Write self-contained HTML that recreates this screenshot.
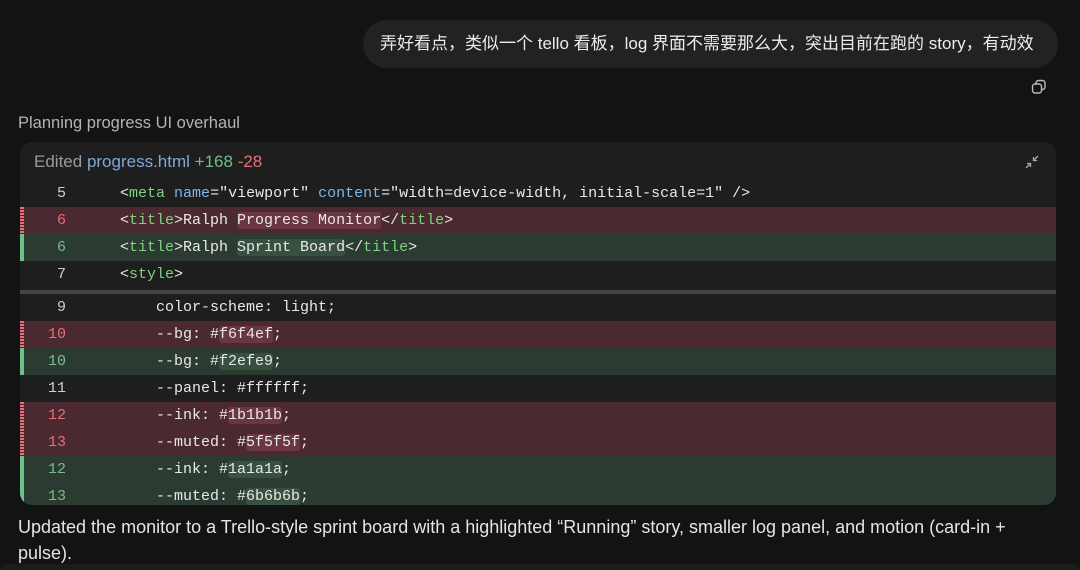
<!DOCTYPE html>
<html><head><meta charset="utf-8"><style>
body{margin:0;width:1080px;height:570px;background:#131313;overflow:hidden;font-family:"Liberation Sans","Noto Sans CJK SC",sans-serif;color:#e6e6e6;position:relative}
.bubble{position:absolute;left:363px;top:20px;width:695px;height:48px;background:#222;border-radius:24px;font-size:17px;line-height:48px;color:#ececec;box-sizing:border-box;padding-left:17px;white-space:nowrap}
.plan{position:absolute;left:18px;top:114px;font-size:16.5px;color:#b4b4b4}
.card{position:absolute;left:20px;top:142px;width:1036px;height:363px;background:#1e1e1e;border-radius:12px;overflow:hidden}
.hdr{position:absolute;left:14px;top:10px;font-size:17px;color:#9a9a9a}
.row{position:absolute;left:0;width:1036px;height:27px;font-family:"Liberation Mono",monospace;font-size:15px;line-height:27px;white-space:pre;color:#e8e8e8}
.n{position:absolute;left:0;width:46px;text-align:right;color:#cfcfcf}
.c{position:absolute;left:64px}
.del{background:#4a2a30}.del .n{color:#e96d7a}
.add{background:#2b3b31}.add .n{color:#76bf8c}
.del::before{content:"";position:absolute;left:0;top:0;width:4px;height:27px;background:repeating-linear-gradient(#e96d7a 0 2px,transparent 2px 3px)}
.add::before{content:"";position:absolute;left:0;top:0;width:4px;height:27px;background:#6fbf8a}
.dn{background:#6a363f;border-radius:3px}.an{background:#38503f;border-radius:3px}
.t{color:#7fd17f}.a{color:#7fb6e8}
.sep{position:absolute;left:0;top:148px;width:1036px;height:4px;background:#444}
.bottom{position:absolute;left:18px;top:514px;width:1030px;font-size:18px;line-height:26px;color:#e4e4e4}
</style></head><body>
<div class="bubble">弄好看点，类似一个 tello 看板，log 界面不需要那么大，突出目前在跑的 story，有动效</div>
<svg style="position:absolute;left:1031px;top:79px" width="16" height="16" viewBox="0 0 16 16" fill="none" stroke="#bbb" stroke-width="1.4"><rect x="1.5" y="5" width="9" height="9" rx="2.5"/><path d="M5 5V4a2.5 2.5 0 0 1 2.5-2.5h4A2.5 2.5 0 0 1 14 4v4a2.5 2.5 0 0 1-2.5 2.5h-1"/></svg>
<div class="plan">Planning progress UI overhaul</div>
<div class="card">
<div class="hdr">Edited <span style="color:#7fa8d8">progress.html</span> <span style="color:#6fbf8a">+168</span> <span style="color:#e96d7a">-28</span></div>
<svg style="position:absolute;left:1004px;top:12px" width="16" height="16" viewBox="0 0 16 16" fill="none" stroke="#aaa" stroke-width="1.3"><path d="M14 2 9.5 6.5M9.5 3v3.5H13M2 14l4.5-4.5M3 9.5h3.5V13"/></svg>
<div class="row" style="top:38px"><span class="n">5</span><span class="c">    &lt;<span class="t">meta</span> <span class="a">name</span>="viewport" <span class="a">content</span>="width=device-width, initial-scale=1" /&gt;</span></div>
<div class="row del" style="top:65px"><span class="n">6</span><span class="c">    &lt;<span class="t">title</span>&gt;Ralph <span class="dn">Progress Monitor</span>&lt;/<span class="t">title</span>&gt;</span></div>
<div class="row add" style="top:92px"><span class="n">6</span><span class="c">    &lt;<span class="t">title</span>&gt;Ralph <span class="an">Sprint Board</span>&lt;/<span class="t">title</span>&gt;</span></div>
<div class="row" style="top:119px"><span class="n">7</span><span class="c">    &lt;<span class="t">style</span>&gt;</span></div>
<div class="sep"></div>
<div class="row" style="top:152px"><span class="n">9</span><span class="c">        color-scheme: light;</span></div>
<div class="row del" style="top:179px"><span class="n">10</span><span class="c">        --bg: #<span class="dn">f6f4ef</span>;</span></div>
<div class="row add" style="top:206px"><span class="n">10</span><span class="c">        --bg: #<span class="an">f2efe9</span>;</span></div>
<div class="row" style="top:233px"><span class="n">11</span><span class="c">        --panel: #ffffff;</span></div>
<div class="row del" style="top:260px"><span class="n">12</span><span class="c">        --ink: #<span class="dn">1b1b1b</span>;</span></div>
<div class="row del" style="top:287px"><span class="n">13</span><span class="c">        --muted: #<span class="dn">5f5f5f</span>;</span></div>
<div class="row add" style="top:314px"><span class="n">12</span><span class="c">        --ink: #<span class="an">1a1a1a</span>;</span></div>
<div class="row add" style="top:341px"><span class="n">13</span><span class="c">        --muted: #<span class="an">6b6b6b</span>;</span></div>
</div>
<div class="bottom">Updated the monitor to a Trello-style sprint board with a highlighted “Running” story, smaller log panel, and motion (card-in + pulse).</div>
<div style="position:absolute;left:0;top:564px;width:1080px;height:6px;background:#1c1c1c;border-radius:8px 8px 0 0"></div>
</body></html>
